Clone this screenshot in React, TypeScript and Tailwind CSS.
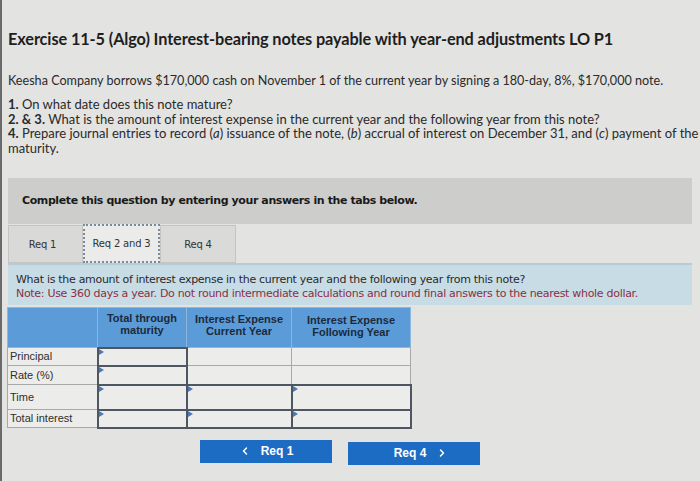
import React from "react";
import { ChevronLeft, ChevronRight } from "lucide-react";

const Tri = () => (
  <span className="absolute left-0 top-0 w-0 h-0 border-t-[3px] border-b-[3px] border-l-[5px] border-t-transparent border-b-transparent border-l-[#4a78b8]" />
);

function InCell({ dark, tri, w }: { dark?: boolean; tri?: boolean; w: string }) {
  return (
    <td className={`relative p-0 ${w} ${dark ? "border-2 border-[#4d5661]" : "border border-[#a9a9a9]"} bg-[#ecedeb]`}>
      {tri && <Tri />}
    </td>
  );
}

export default function App() {
  const sans = { fontFamily: "Lato, 'Open Sans', sans-serif" };
  const verd = { fontFamily: "'DejaVu Sans', Verdana, sans-serif" };
  const arial = { fontFamily: "'Liberation Sans', Arial, sans-serif" };
  return (
    <div className="w-[700px] h-[481px] overflow-hidden bg-[#e3e3e1] border-l-2 border-[#6a6a6a] text-[#222]">
      <div className="pl-[6px] pr-[8px]">
        <div style={sans} className="pt-[29px] text-[16.3px] font-bold leading-[20px] text-[#1e1e1e] tracking-[-0.1px]">
          Exercise 11-5 (Algo) Interest-bearing notes payable with year-end adjustments LO P1
        </div>
        <div style={sans} className="mt-[24px] text-[12.6px] leading-[16px] text-[#2a2a2a]">
          Keesha Company borrows $170,000 cash on November 1 of the current year by signing a 180-day, 8%, $170,000 note.
        </div>
        <div style={sans} className="mt-[8px] w-[700px] text-[13px] leading-[14.5px] text-[#2a2a2a] whitespace-nowrap">
          <div><b>1.</b> On what date does this note mature?</div>
          <div><b>2. &amp; 3.</b> What is the amount of interest expense in the current year and the following year from this note?</div>
          <div><b>4.</b> Prepare journal entries to record (<i>a</i>) issuance of the note, (<i>b</i>) accrual of interest on December 31, and (<i>c</i>) payment of the no</div>
          <div>maturity.</div>
        </div>

        <div className="mt-[23px] w-[684px] h-[46px] bg-[#cdcdcb] flex items-center pl-[14px]">
          <span style={verd} className="text-[11px] font-bold text-[#1a1a1a] tracking-[-0.4px]">
            Complete this question by entering your answers in the tabs below.
          </span>
        </div>

        <div style={verd} className="flex h-[39px] text-[10px] text-[#333] tracking-[-0.2px]">
          <div className="w-[75px] mt-[1px] bg-[#d9d9d7] border border-[#c4c4c2] flex items-center justify-center pr-[6px]">Req 1</div>
          <div className="w-[77px] bg-[#ebebe9] border-2 border-dotted border-[#7a8a9a] flex items-center justify-center">Req 2 and 3</div>
          <div className="w-[76px] mt-[1px] bg-[#dadad8] border border-[#c4c4c2] flex items-center justify-center">Req 4</div>
        </div>

        <div style={verd} className="w-[684px] h-[42px] bg-[#c8dce6] border-t-2 border-[#b7cbd6] pl-[8px] pt-[8px] text-[11px] leading-[14px] tracking-[-0.3px]">
          <div className="text-[#2a2a2a]">What is the amount of interest expense in the current year and the following year from this note?</div>
          <div className="text-[#8c2f3f]">Note: Use 360 days a year. Do not round intermediate calculations and round final answers to the nearest whole dollar.</div>
        </div>

        <table style={arial} className="mt-[2px] -ml-[1px] border-collapse text-[11px]">
          <thead>
            <tr className="h-[40px] bg-[#5b9bd8] text-[#1c2a3a] font-bold leading-[12px]">
              <th className="w-[90px] border border-[#8fb6de]"></th>
              <th className="w-[89px] border border-[#8fb6de] font-bold pb-[6px]">Total through<br />maturity</th>
              <th className="w-[105px] border border-[#8fb6de] font-bold pb-[6px]">Interest Expense<br />Current Year</th>
              <th className="w-[119px] border border-[#8fb6de] font-bold pb-[4px]">Interest Expense<br />Following Year</th>
            </tr>
          </thead>
          <tbody className="text-[#2e2e2e]">
            <tr className="h-[18px]">
              <td className="border border-[#a9a9a9] bg-[#ecedeb] pl-[2px] leading-none">Principal</td>
              <InCell dark tri w="w-[89px]" />
              <InCell w="w-[105px]" />
              <InCell w="w-[119px]" />
            </tr>
            <tr className="h-[19px]">
              <td className="border border-[#a9a9a9] bg-[#ecedeb] pl-[2px] leading-none">Rate (%)</td>
              <InCell dark tri w="w-[89px]" />
              <InCell w="w-[105px]" />
              <InCell w="w-[119px]" />
            </tr>
            <tr className="h-[25px]">
              <td className="border border-[#a9a9a9] bg-[#ecedeb] pl-[2px] leading-none">Time</td>
              <InCell dark tri w="w-[89px]" />
              <InCell dark tri w="w-[105px]" />
              <InCell dark tri w="w-[119px]" />
            </tr>
            <tr className="h-[18px]">
              <td className="border border-[#a9a9a9] bg-[#ecedeb] pl-[2px] leading-none">Total interest</td>
              <InCell dark tri w="w-[89px]" />
              <InCell dark tri w="w-[105px]" />
              <InCell dark tri w="w-[119px]" />
            </tr>
          </tbody>
        </table>

        <div style={arial} className="mt-[11px] flex gap-[16px] pl-[192px] text-[12px] font-bold text-white">
          <div className="w-[132px] h-[23px] bg-[#1d6cc4] flex items-center justify-center gap-[10px]">
            <ChevronLeft size={12} strokeWidth={3} />
            <span>Req 1</span>
          </div>
          <div className="w-[132px] h-[23px] mt-[2px] bg-[#1d6cc4] flex items-center justify-center gap-[10px] pl-[14px]">
            <span>Req 4</span>
            <ChevronRight size={12} strokeWidth={3} />
          </div>
        </div>
      </div>
    </div>
  );
}
